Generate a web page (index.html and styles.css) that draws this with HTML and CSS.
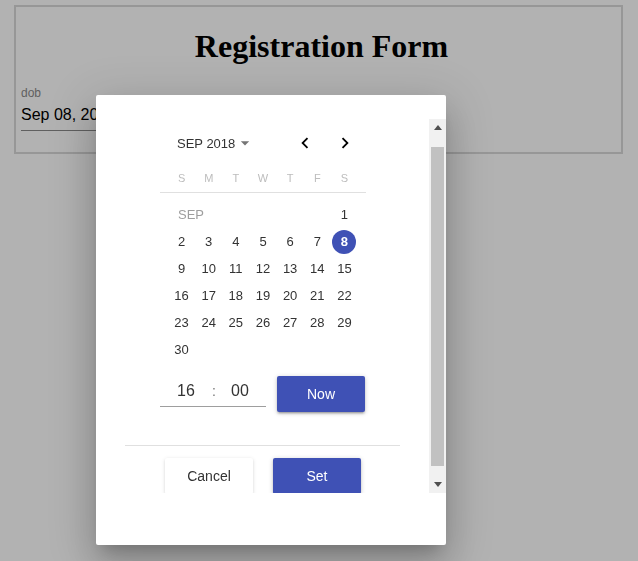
FILE: index.html
```html
<!DOCTYPE html>
<html>
<head>
<meta charset="utf-8">
<link rel="stylesheet" href="styles.css">
</head>
<body>
<div class="form-box">
  <h1 class="title">Registration Form</h1>
  <div class="field">
    <label class="field-label">dob</label>
    <div class="field-input">Sep 08, 2018 16:00</div>
  </div>
</div>

<div class="overlay"></div>

<div class="dialog">
  <div class="dialog-body">
    <div class="dialog-content">
      <div class="calendar">
        <div class="cal-header">
          <div class="month-select">SEP 2018
            <svg class="drop" viewBox="0 0 24 24" width="20" height="20"><path d="M7 10l5 5 5-5z" fill="#757575"/></svg>
          </div>
          <div class="nav">
            <button class="nav-btn"><svg viewBox="0 0 24 24" width="22" height="22"><path d="M15.41 7.41L14 6l-6 6 6 6 1.41-1.41L10.83 12z" fill="#000"/></svg></button>
            <button class="nav-btn"><svg viewBox="0 0 24 24" width="22" height="22"><path d="M8.59 16.59L10 18l6-6-6-6-1.41 1.41L13.17 12z" fill="#000"/></svg></button>
          </div>
        </div>
        <div class="weekdays">
          <span>S</span><span>M</span><span>T</span><span>W</span><span>T</span><span>F</span><span>S</span>
        </div>
        <div class="days">
          <span class="month-label">SEP</span><span class="day col7">1</span>
          <span class="day">2</span><span class="day">3</span><span class="day">4</span><span class="day">5</span><span class="day">6</span><span class="day">7</span><span class="day"><b class="selected">8</b></span>
          <span class="day">9</span><span class="day">10</span><span class="day">11</span><span class="day">12</span><span class="day">13</span><span class="day">14</span><span class="day">15</span>
          <span class="day">16</span><span class="day">17</span><span class="day">18</span><span class="day">19</span><span class="day">20</span><span class="day">21</span><span class="day">22</span>
          <span class="day">23</span><span class="day">24</span><span class="day">25</span><span class="day">26</span><span class="day">27</span><span class="day">28</span><span class="day">29</span>
          <span class="day">30</span>
        </div>
      </div>
      <div class="time-row">
        <div class="time-field">
          <span>16</span><span class="colon">:</span><span>00</span>
        </div>
        <button class="btn btn-primary">Now</button>
      </div>
      <div class="divider"></div>
      <div class="actions">
        <button class="btn btn-plain">Cancel</button>
        <button class="btn btn-primary">Set</button>
      </div>
    </div>
    <div class="scrollbar">
      <div class="sb-arrow"><svg viewBox="0 0 8 5" width="8" height="5"><path d="M0 5L4 0L8 5z" fill="#505050"/></svg></div>
      <div class="sb-track"><div class="sb-thumb"></div></div>
      <div class="sb-arrow"><svg viewBox="0 0 8 5" width="8" height="5"><path d="M0 0L8 0L4 5z" fill="#505050"/></svg></div>
    </div>
  </div>
</div>
</body>
</html>
```

FILE: styles.css
```css
html, body {
  margin: 0;
  padding: 0;
  background: #fff;
}
body {
  width: 638px;
  height: 561px;
  overflow: hidden;
  font-family: "Liberation Sans", Arial, sans-serif;
}
.form-box {
  margin: 5px 15px 0 14px;
  height: 145px;
  border: 2px solid #d8d8d8;
  padding: 0 5px;
}
.title {
  font-family: "Liberation Serif", "Times New Roman", serif;
  font-size: 32px;
  font-weight: bold;
  text-align: center;
  margin: 21px 0 0 6px;
  line-height: 37px;
  color: #000;
}
.field {
  margin-top: 21px;
  width: 300px;
}
.field-label {
  display: block;
  font-size: 12px;
  line-height: 14px;
  color: #8a8a8a;
}
.field-input {
  font-size: 16px;
  line-height: 20px;
  padding: 5px 0 5px;
  color: #000;
  border-bottom: 1px solid #8a8a8a;
  white-space: nowrap;
}
.overlay {
  position: fixed;
  inset: 0;
  background: rgba(0, 0, 0, 0.3);
}
.dialog {
  position: absolute;
  left: 96px;
  top: 95px;
  width: 350px;
  height: 450px;
  box-sizing: border-box;
  padding-top: 24px;
  background: #fff;
  border-radius: 2px;
  box-shadow: 0 11px 15px -7px rgba(0,0,0,.2), 0 24px 38px 3px rgba(0,0,0,.14), 0 9px 46px 8px rgba(0,0,0,.12);
}
.dialog-body {
  display: flex;
  height: 374px;
}
.dialog-content {
  flex: 1;
  overflow: hidden;
  padding-top: 4px;
  display: flex;
  flex-direction: column;
  align-items: center;
}
.dialog-content > * {
  flex-shrink: 0;
}
.calendar {
  width: 206px;
  margin-left: 1px;
}
.cal-header {
  height: 40px;
  margin-bottom: 1px;
  display: flex;
  align-items: center;
  justify-content: space-between;
}
.month-select {
  display: flex;
  align-items: center;
  padding-left: 17px;
  font-size: 13px;
  color: #333;
}
.nav {
  display: flex;
  margin-right: 1px;
}
.nav-btn {
  width: 40px;
  height: 40px;
  border: 0;
  padding: 0;
  background: none;
  display: flex;
  align-items: center;
  justify-content: center;
}
.weekdays {
  display: grid;
  grid-template-columns: repeat(7, 1fr);
  padding: 0 8px;
  height: 28px;
  align-items: center;
  border-bottom: 1px solid #e0e0e0;
  font-size: 11px;
  color: #bdbdbd;
  text-align: center;
}
.days {
  display: grid;
  grid-template-columns: repeat(7, 1fr);
  grid-auto-rows: 27px;
  padding: 8px 8px 0;
  font-size: 13px;
  color: #333;
}
.month-label {
  grid-column: 1 / span 3;
  display: flex;
  align-items: center;
  padding-left: 10px;
  color: #9e9e9e;
}
.day {
  display: flex;
  align-items: center;
  justify-content: center;
}
.col7 {
  grid-column: 7;
}
.selected {
  width: 24px;
  height: 24px;
  border-radius: 50%;
  background: #3f51b5;
  color: #fff;
  font-weight: bold;
  display: flex;
  align-items: center;
  justify-content: center;
}
.time-row {
  margin-top: 13px;
  width: 206px;
  display: flex;
  gap: 11px;
  margin-left: 1px;
}
.time-field {
  width: 106px;
  height: 30px;
  border-bottom: 1px solid #9e9e9e;
  display: grid;
  grid-template-columns: 52px 2px 52px;
  align-items: center;
  text-align: center;
  font-size: 16px;
  color: #333;
}
.colon {
  color: #777;
  font-size: 14px;
}
.btn {
  width: 88px;
  height: 36px;
  border: 0;
  border-radius: 2px;
  font-family: "Liberation Sans", Arial, sans-serif;
  font-size: 14px;
  padding: 0;
}
.btn-primary {
  background: #3f51b5;
  color: #fff;
  box-shadow: 0 1px 5px rgba(0,0,0,.2), 0 2px 2px rgba(0,0,0,.14), 0 3px 1px -2px rgba(0,0,0,.12);
}
.btn-plain {
  background: #fff;
  color: #333;
  box-shadow: 0 1px 4px rgba(0,0,0,.12), 0 1px 2px rgba(0,0,0,.08);
}
.divider {
  margin-top: 33px;
  width: 275px;
  height: 1px;
  background: #e0e0e0;
}
.actions {
  margin-top: 12px;
  display: flex;
  gap: 20px;
  margin-left: 1px;
}
.scrollbar {
  width: 17px;
  background: #f1f1f1;
  display: flex;
  flex-direction: column;
}
.sb-arrow {
  height: 17px;
  display: flex;
  align-items: center;
  justify-content: center;
}
.sb-track {
  flex: 1;
  padding: 11px 2px 0;
}
.sb-thumb {
  height: 319px;
  background: #c1c1c1;
}
```
